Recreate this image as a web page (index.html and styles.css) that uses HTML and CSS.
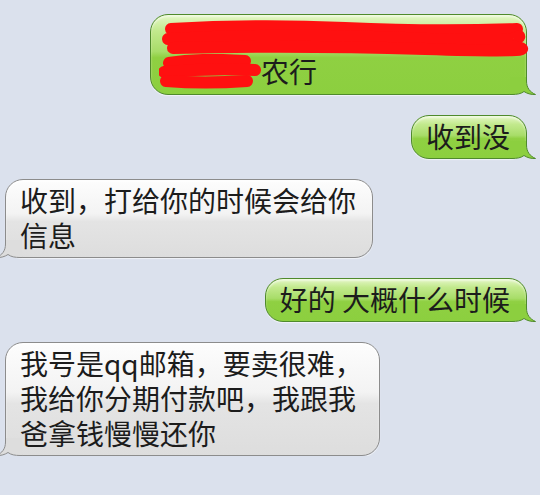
FILE: index.html
```html
<!DOCTYPE html>
<html lang="zh-CN">
<head>
    <meta charset="UTF-8">
    <meta name="viewport" content="width=device-width, initial-scale=1.0">
    <title>短信</title>
    <link rel="stylesheet" href="styles.css">
</head>
<body>

    <div class="chat">

        <div class="bubble sent first">
            <svg class="scribble-line" width="348" height="35" viewBox="0 0 348 35">
                <path d="M6 10 Q 90 5 180 9 T 352 10" />
                <path d="M3 20 Q 120 14 240 19 T 354 17" />
                <path d="M8 29 Q 130 26 260 30 T 346 27" />
            </svg>
            <div class="line"><svg class="scribble-blob" width="102" height="35" viewBox="0 0 102 35">
                <path d="M10 9 Q 40 4 86 7" />
                <path d="M5 18 Q 50 14 96 16" />
                <path d="M7 27 Q 45 30 88 27" />
            </svg>农行</div>
            <svg class="tail" width="26" height="24" viewBox="0 0 26 24">
                <path class="tail-fill" d="M16.5 6 L16.5 10 C16.5 17 20 21 25.5 23.5 C21 23.8 17 22.5 14 20.5 C11 22.8 7 23.5 2 23.5 L0 23.5 L0 6 Z" />
                <path class="tail-line" d="M16.5 6 L16.5 10 C16.5 17 20 21 25.5 23.5 C21 23.8 17 22.5 14 20.5 C11 22.8 7 23.5 2 23.5 L0 23.5" />
            </svg>
        </div>

        <div class="bubble sent">
            收到没
            <svg class="tail" width="26" height="24" viewBox="0 0 26 24">
                <path class="tail-fill" d="M16.5 6 L16.5 10 C16.5 17 20 21 25.5 23.5 C21 23.8 17 22.5 14 20.5 C11 22.8 7 23.5 2 23.5 L0 23.5 L0 6 Z" />
                <path class="tail-line" d="M16.5 6 L16.5 10 C16.5 17 20 21 25.5 23.5 C21 23.8 17 22.5 14 20.5 C11 22.8 7 23.5 2 23.5 L0 23.5" />
            </svg>
        </div>

        <div class="bubble received">
            收到，打给你的时候会给你<br>信息
            <svg class="tail" width="26" height="24" viewBox="0 0 26 24">
                <path class="tail-fill" d="M16.5 6 L16.5 10 C16.5 17 20 21 25.5 23.5 C21 23.8 17 22.5 14 20.5 C11 22.8 7 23.5 2 23.5 L0 23.5 L0 6 Z" />
                <path class="tail-line" d="M16.5 6 L16.5 10 C16.5 17 20 21 25.5 23.5 C21 23.8 17 22.5 14 20.5 C11 22.8 7 23.5 2 23.5 L0 23.5" />
            </svg>
        </div>

        <div class="bubble sent">
            好的 大概什么时候
            <svg class="tail" width="26" height="24" viewBox="0 0 26 24">
                <path class="tail-fill" d="M16.5 6 L16.5 10 C16.5 17 20 21 25.5 23.5 C21 23.8 17 22.5 14 20.5 C11 22.8 7 23.5 2 23.5 L0 23.5 L0 6 Z" />
                <path class="tail-line" d="M16.5 6 L16.5 10 C16.5 17 20 21 25.5 23.5 C21 23.8 17 22.5 14 20.5 C11 22.8 7 23.5 2 23.5 L0 23.5" />
            </svg>
        </div>

        <div class="bubble received">
            我号是qq邮箱，要卖很难，<br>我给你分期付款吧，我跟我<br>爸拿钱慢慢还你
            <svg class="tail" width="26" height="24" viewBox="0 0 26 24">
                <path class="tail-fill" d="M16.5 6 L16.5 10 C16.5 17 20 21 25.5 23.5 C21 23.8 17 22.5 14 20.5 C11 22.8 7 23.5 2 23.5 L0 23.5 L0 6 Z" />
                <path class="tail-line" d="M16.5 6 L16.5 10 C16.5 17 20 21 25.5 23.5 C21 23.8 17 22.5 14 20.5 C11 22.8 7 23.5 2 23.5 L0 23.5" />
            </svg>
        </div>

    </div>

</body>
</html>
```

FILE: styles.css
```css
body {
    margin: 0;
    background-color: #dbe1ed;
    font-family: "Noto Sans CJK SC", "Noto Sans", sans-serif;
}
.chat {
    display: flex;
    flex-direction: column;
    gap: 20px;
    padding: 14px 13px 0 5px;
}
.bubble {
    position: relative;
    padding: 3px 16px 4px 14px;
    font-size: 28px;
    line-height: 35px;
    color: #1c1c1c;
    border-radius: 18px;
    white-space: nowrap;
}
.sent {
    align-self: flex-end;
    border: 1px solid #4f8a2c;
    background: linear-gradient(to bottom, #e4f7c6 0%, #c2e98d 20%, #a8dd69 46%, #8fd042 54%, #8ccf3f 100%);
    box-shadow: inset 0 2px 2px rgba(255, 255, 255, 0.5), 0 1px 1px rgba(255, 255, 255, 0.6);
}
.received {
    align-self: flex-start;
    border: 1px solid #8c8c8c;
    background: linear-gradient(to bottom, #fdfdfd 0%, #f3f3f3 44%, #e4e4e4 54%, #dddddd 100%);
    box-shadow: inset 0 2px 2px rgba(255, 255, 255, 0.7), 0 1px 1px rgba(255, 255, 255, 0.6);
}
.first {
    padding: 4px 13px 5px 14px;
}
.line {
    display: flex;
    align-items: center;
}
.scribble-line {
    display: block;
    overflow: visible;
}
.scribble-blob {
    margin-left: -6px;
}
.scribble-line path,
.scribble-blob path {
    fill: none;
    stroke: #ff1010;
    stroke-width: 12;
    stroke-linecap: round;
}
.tail {
    position: absolute;
    bottom: -1px;
    right: -10px;
}
.received .tail {
    right: auto;
    left: -10px;
    transform: scaleX(-1);
}
.tail-line {
    fill: none;
    stroke-width: 1;
}
.sent .tail-fill {
    fill: #8ccf3f;
}
.sent .tail-line {
    stroke: #4f8a2c;
}
.received .tail-fill {
    fill: #dddddd;
}
.received .tail-line {
    stroke: #8c8c8c;
}
```
